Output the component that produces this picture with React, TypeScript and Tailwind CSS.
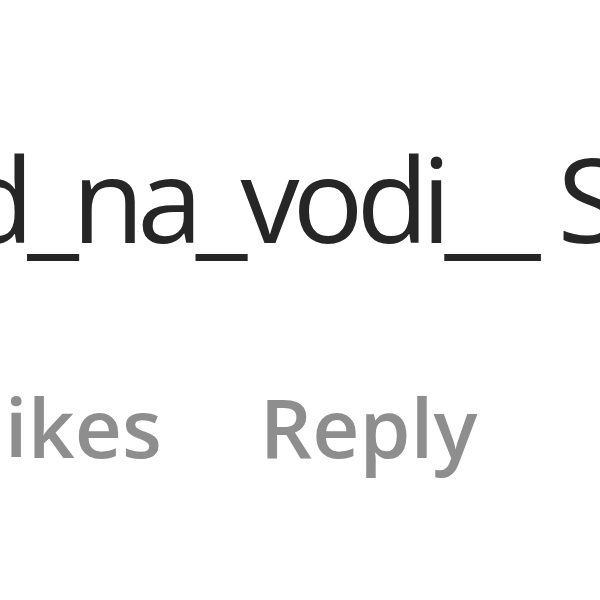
export default function App() {
  return (
    <div
      className="w-[600px] h-[600px] bg-white overflow-hidden"
      style={{ fontFamily: '"Open Sans", "Noto Sans", sans-serif' }}
    >
      <div className="pt-[118px] -ml-[38px] whitespace-nowrap text-[#262626] text-[118px] leading-[160px] tracking-[-7px]">
        d_na_vodi__ Sa
      </div>
      <div className="mt-[98px] -ml-[18px] flex items-baseline gap-[98px] whitespace-nowrap text-[#8e8e8e] text-[82px] leading-[100px] font-semibold">
        <span>likes</span>
        <span>Reply</span>
      </div>
    </div>
  );
}
